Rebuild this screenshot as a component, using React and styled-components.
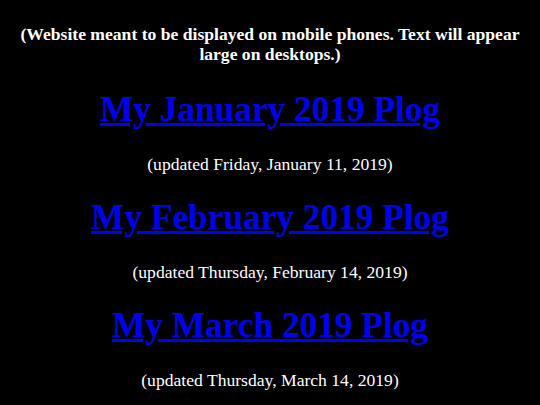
import React from 'react';
import styled, { createGlobalStyle } from 'styled-components';

const GlobalStyle = createGlobalStyle`
  body {
    margin: 8px;
    background-color: #000;
    color: #fff;
    font-family: "Liberation Serif", "Times New Roman", serif;
  }
`;

const Page = styled.div`
  text-align: center;
`;

const Notice = styled.p`
  font-size: 17.6px;
  font-weight: bold;
  line-height: 20px;
  margin: 16px 0 25px 0;
`;

const PlogTitle = styled.h1`
  font-size: 35.3px;
  font-weight: bold;
  margin: 22px 0 0 0;
  line-height: 42px;
`;

const PlogLink = styled.a`
  color: #0000ee;
  text-decoration: underline;
`;

const Updated = styled.p`
  font-size: 17.6px;
  margin: 23px 0 0 0;
  line-height: 21px;
`;

const plogs = [
  { month: 'January', updated: 'Friday, January 11, 2019' },
  { month: 'February', updated: 'Thursday, February 14, 2019' },
  { month: 'March', updated: 'Thursday, March 14, 2019' },
];

function App() {
  return (
    <Page>
      <GlobalStyle />
      <Notice>
        (Website meant to be displayed on mobile phones. Text will appear large on
        desktops.)
      </Notice>
      {plogs.map((p) => (
        <React.Fragment key={p.month}>
          <PlogTitle>
            <PlogLink href="#">My {p.month} 2019 Plog</PlogLink>
          </PlogTitle>
          <Updated>(updated {p.updated})</Updated>
        </React.Fragment>
      ))}
    </Page>
  );
}

export default App;
